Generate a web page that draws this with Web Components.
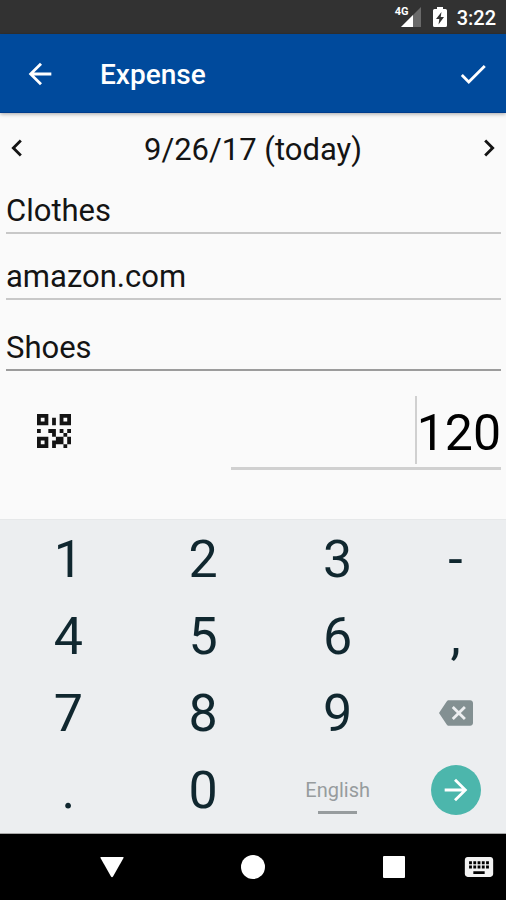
<!DOCTYPE html>
<html lang="en">
<head>
<meta charset="utf-8">
<meta name="viewport" content="width=device-width, initial-scale=1">
<title>Expense</title>
<style>
html, body { height: 100%; margin: 0; }
body { font-family: Roboto, "Noto Sans", sans-serif; background: #fafafa; color: #141414; }
</style>
</head>
<body>
<expense-screen></expense-screen>
<script>
const RESET = `
  *, *::before { box-sizing: border-box; }
  button { display: grid; place-items: center; margin: 0; padding: 0; border: 0; background: none; color: inherit; font: inherit; cursor: pointer; }
  input { display: block; margin: 0; padding: 0; border: 0; outline: 0; background: none; color: inherit; font: inherit; min-width: 0; }
  svg { display: block; fill: currentColor; }
`;

function define(name, css, html) {
  customElements.define(name, class extends HTMLElement {
    constructor() {
      super();
      const root = this.attachShadow({ mode: 'open' });
      const template = document.createElement('template');
      template.innerHTML = `<style>${RESET}${css}</style>${typeof html === 'function' ? html(this) : html}`;
      root.append(template.content.cloneNode(true));
    }
  });
}

const icon = (path, size = 34) => `<svg width="${size}" height="${size}" viewBox="0 0 24 24" aria-hidden="true"><path d="${path}"/></svg>`;

define('status-bar', `
  :host { display: flex; align-items: center; justify-content: flex-end; height: 34px; padding-right: 10px; background: #323232; color: #fff; }
  .time { font-size: 20px; line-height: 24px; font-weight: 500; margin-left: 10px; padding-top: 2px; }
  .signal { position: relative; width: 26px; height: 22px; margin-right: 12px; }
  .signal svg { margin-left: 5px; }
  .signal span { position: absolute; left: 0; top: 0; font-size: 11px; line-height: 11px; font-weight: 700; }
`, `
  <div class="signal">
    <svg width="21" height="22" viewBox="0 0 21 22" aria-hidden="true"><path d="M21 1V21H1Z" fill="#6a6a6a"/><path d="M13 9V21H1Z"/></svg>
    <span>4G</span>
  </div>
  <svg width="14" height="22" viewBox="0 0 14 22" role="img" aria-label="Charging"><path d="M4 1h6v2h2.500q1.500 0 1.500 1.500v15q0 1.500-1.500 1.500h-11Q0 21 0 19.500v-15Q0 3 1.500 3H4z"/><path d="M8.500 6L3 13h3.300L5.500 18.500 11 11H7.700z" fill="#323232"/></svg>
  <div class="time">3:22</div>
`);

define('app-bar', `
  :host { display: flex; align-items: center; height: 79px; background: #004a9c; color: #fff; border-bottom: 1px solid #003c8c; box-shadow: 0 1px 4px rgba(0,0,0,.35); position: relative; }
  button { width: 66px; height: 66px; padding-top: 1px; }
  .back { margin-left: 7px; margin-right: 27px; }
  h1 { flex: 1; margin: 0; padding-top: 4px; font-size: 28px; line-height: 32px; font-weight: 500; }
`, `
  <button class="back" aria-label="Back">${icon('M20 11H7.830l5.590-5.590L12 4l-8 8 8 8 1.410-1.410L7.830 13H20v-2z')}</button>
  <h1><slot></slot></h1>
  <button aria-label="Save">${icon('M9 16.170L4.830 12l-1.420 1.410L9 19 21 7l-1.410-1.410z')}</button>
`);

define('date-picker', `
  :host { display: flex; align-items: center; justify-content: space-between; height: 70px; }
  button { width: 34px; height: 48px; }
  .date { font-size: 31px; line-height: 40px; padding-top: 3px; }
`, `
  <button aria-label="Previous day">${icon('M15.410 7.410L14 6l-6 6 6 6 1.410-1.410L10.830 12z')}</button>
  <div class="date"><slot></slot></div>
  <button aria-label="Next day">${icon('M10 6L8.590 7.410 13.170 12l-4.580 4.590L10 18l6-6z')}</button>
`);

define('text-field', `
  :host { display: block; margin: 0 5px 0 6px; border-bottom: 2px solid var(--line, #c8c8c8); }
  input { width: 100%; height: 40px; padding-bottom: 3px; font-size: 31px; }
`, el => `<input type="text" aria-label="${el.getAttribute('label')}" value="${el.getAttribute('value')}">`);

define('amount-row', `
  :host { display: flex; align-items: flex-start; justify-content: space-between; padding: 25px 5px 0 21px; }
  button { width: 66px; height: 70px; }
  .amount { flex: 0 1 270px; display: flex; justify-content: flex-end; height: 74px; border-bottom: 3px solid #d0d0d0; color: #000; }
  .caret { width: 2px; height: 68px; background: #d0d0d0; }
  input { width: 3ch; height: 72px; padding-top: 1px; font-size: 50px; }
`, `
  <button aria-label="Scan code"><svg width="34" height="34" viewBox="0 0 9 9" aria-hidden="true"><path fill-rule="evenodd" d="M0 0h3v3H0zM1 1v1h1V1zM6 0h3v3H6zM7 1v1h1V1zM0 6h3v3H0zM1 7v1h1V7zM4 1h1v2H4zM0 4h1v1H0zM3 4h2v2H4V5H3zM6 4h1v1H6zM8 4h1v1H8zM7 5h1v1H7zM5 6h2v2H5v1H4V7h1zM8 6h1v2H8zM7 8h1v1H7z"/></svg></button>
  <div class="amount"><span class="caret"></span><input type="text" inputmode="decimal" aria-label="Amount" value="120"></div>
`);

define('key-pad', `
  :host { display: grid; grid-template-columns: 4fr 4fr 4fr 3fr; grid-auto-rows: 77px; padding: 0 0 5px 1px; background: #eceef0; color: #10272f; border-top: 1px solid #e6e8e9; border-bottom: 1px solid #a8a8a8; font-size: 52px; line-height: 74px; }
  .key { padding-top: 3px; }
  .delete { color: #839092; }
  .lang { font-size: 20px; line-height: 24px; color: #979c9e; align-content: center; gap: 9px; padding-top: 12px; }
  .lang::after { content: ""; width: 39px; height: 3px; background: #979c9e; }
  .go span { display: grid; place-items: center; width: 50px; height: 50px; border-radius: 50%; background: #4cb6ac; color: #fff; }
`, `
  ${['1','2','3','-','4','5','6',',','7','8','9'].map(k => `<button class="key">${k}</button>`).join('')}
  <button class="delete" aria-label="Delete">${icon('M22 3H7c-.690 0-1.230.350-1.590.880L0 12l5.410 8.110c.360.530.900.890 1.590.890h15c1.100 0 2-.900 2-2V5c0-1.100-.900-2-2-2zm-3 12.590L17.590 17 14 13.410 10.410 17 9 15.590 12.590 12 9 8.410 10.410 7 14 10.590 17.590 7 19 8.410 15.410 12 19 15.590z')}</button>
  <button class="key">.</button><button class="key">0</button>
  <button class="lang">English</button>
  <button class="go" aria-label="Next"><span>${icon('M12 4l-1.410 1.410L16.170 11H4v2h12.170l-5.580 5.590L12 20l8-8z')}</span></button>
`);

define('nav-bar', `
  :host { display: grid; grid-template-columns: 42px 1fr 1fr 1fr 42px; height: 66px; background: #000; color: #fff; }
  button { height: 66px; }
  .back { grid-column: 2; }
  .ime { width: 55px; justify-self: end; color: #f2f2f2; }
`, `
  <button class="back" aria-label="Back"><svg width="24" height="24" viewBox="0 0 24 24"><path d="M1 2h22q1 0 .5 1L13 21.500q-1 1.500-2 0L.5 3Q0 2 1 2z"/></svg></button>
  <button aria-label="Home"><svg width="24" height="24" viewBox="0 0 24 24"><circle cx="12" cy="12" r="12"/></svg></button>
  <button aria-label="Recent apps"><svg width="22" height="22" viewBox="0 0 22 22"><rect width="22" height="22" rx="1"/></svg></button>
  <button class="ime" aria-label="Choose keyboard">${icon('M20 5H4c-1.100 0-1.990.900-1.990 2L2 17c0 1.100.900 2 2 2h16c1.100 0 2-.900 2-2V7c0-1.100-.900-2-2-2zm-9 3h2v2h-2V8zm0 3h2v2h-2v-2zM8 8h2v2H8V8zm0 3h2v2H8v-2zm-1 2H5v-2h2v2zm0-3H5V8h2v2zm9 7H8v-2h8v2zm0-4h-2v-2h2v2zm0-3h-2V8h2v2zm3 3h-2v-2h2v2zm0-3h-2V8h2v2z')}</button>
`);

define('expense-screen', `
  :host { display: flex; flex-direction: column; min-height: 100%; }
  main { flex: 1; display: flex; flex-direction: column; }
  .category { margin-top: 9px; }
  .shop { margin-top: 24px; }
  .note { margin-top: 29px; --line: #9c9c9c; }
`, `
  <status-bar></status-bar>
  <app-bar>Expense</app-bar>
  <main>
    <date-picker>9/26/17 (today)</date-picker>
    <text-field class="category" label="Category" value="Clothes"></text-field>
    <text-field class="shop" label="Payee" value="amazon.com"></text-field>
    <text-field class="note" label="Note" value="Shoes"></text-field>
    <amount-row></amount-row>
  </main>
  <key-pad></key-pad>
  <nav-bar></nav-bar>
`);
</script>
</body>
</html>
